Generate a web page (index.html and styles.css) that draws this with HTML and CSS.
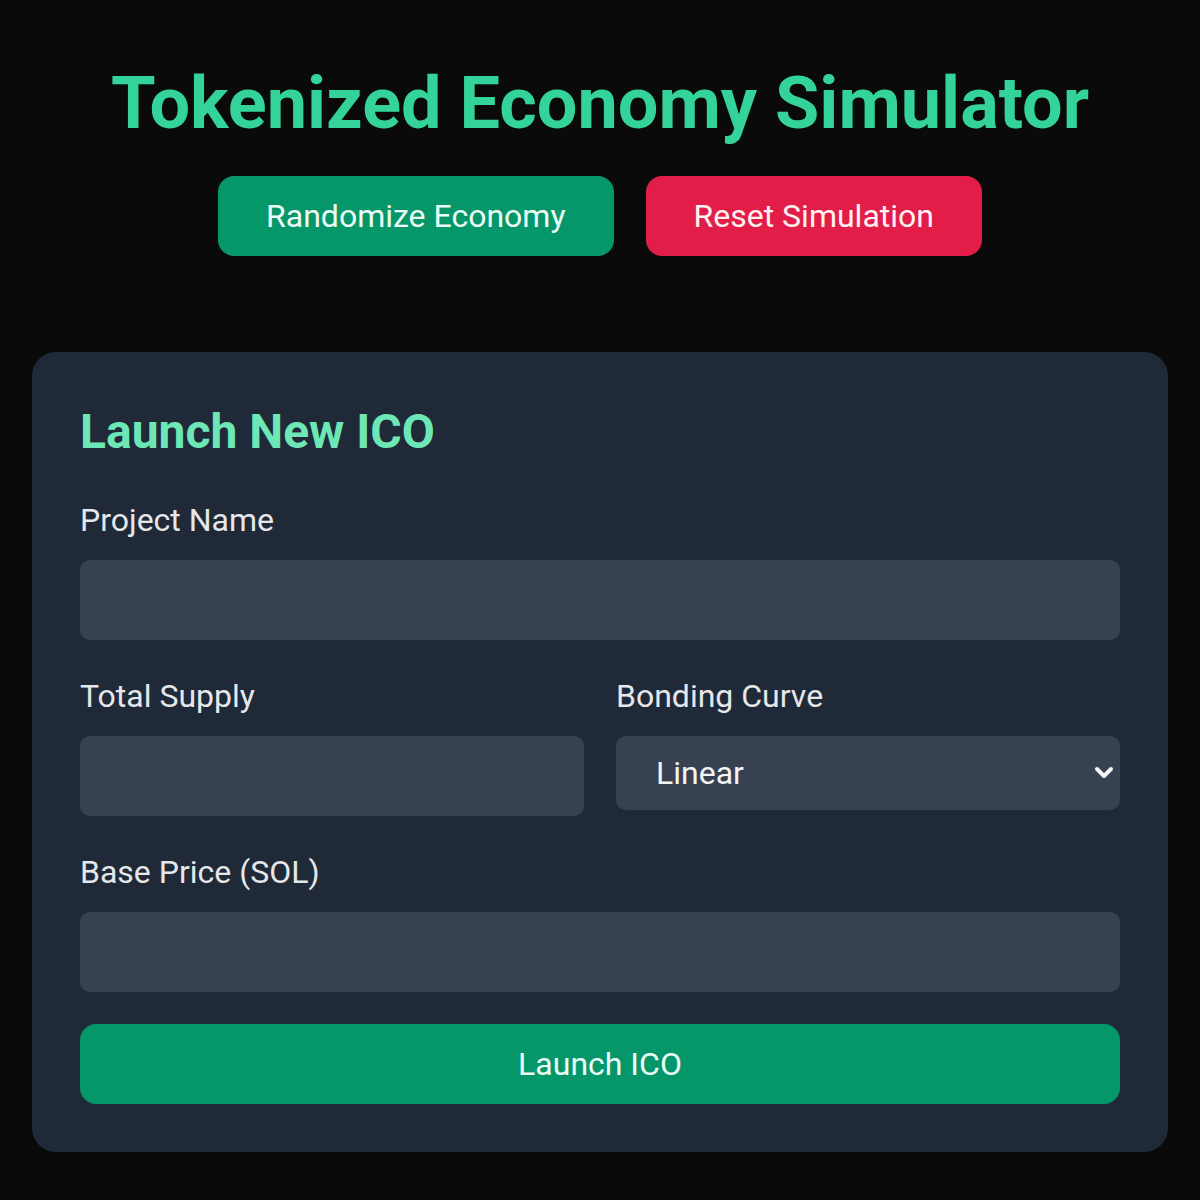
FILE: index.html
```html
<!DOCTYPE html>
<html lang="en">
<head>
<meta charset="utf-8">
<title>Tokenized Economy Simulator</title>
<link rel="stylesheet" href="styles.css">
</head>
<body>
<main class="page">
  <h1 class="title">Tokenized Economy Simulator</h1>
  <div class="actions">
    <button class="btn btn-green">Randomize Economy</button>
    <button class="btn btn-red">Reset Simulation</button>
  </div>
  <section class="card">
    <h2 class="card-title">Launch New ICO</h2>
    <div class="field">
      <label class="label">Project Name</label>
      <input class="input" type="text">
    </div>
    <div class="row">
      <div class="field">
        <label class="label">Total Supply</label>
        <input class="input" type="text">
      </div>
      <div class="field">
        <label class="label">Bonding Curve</label>
        <div class="select-wrap">
          <select class="select">
            <option>Linear</option>
            <option>Exponential</option>
          </select>
          <svg class="chevron" width="20" height="14" viewBox="0 0 20 14"><path d="M3 3 L10 10 L17 3" fill="none" stroke="#f3f4f6" stroke-width="4" stroke-linecap="round" stroke-linejoin="round"/></svg>
        </div>
      </div>
    </div>
    <div class="field">
      <label class="label">Base Price (SOL)</label>
      <input class="input" type="text">
    </div>
    <button class="btn btn-green btn-block">Launch ICO</button>
  </section>
</main>
</body>
</html>
```
FILE: styles.css
```css
* { box-sizing: border-box; }
html, body { margin: 0; padding: 0; background: #0a0a0a; }
body { font-family: Roboto, "Noto Sans", sans-serif; color: #e5e7eb; }
.page { padding: 64px 32px 48px; }
.title {
  margin: 0 0 32px;
  text-align: center;
  font-size: 72px;
  line-height: 80px;
  font-weight: 700;
  color: #34d399;
}
.actions { display: flex; justify-content: center; gap: 32px; margin-bottom: 96px; }
.btn {
  font-family: inherit;
  font-size: 32px;
  line-height: 48px;
  padding: 16px 48px;
  border: 0;
  border-radius: 16px;
  color: #ecfdf5;
  cursor: pointer;
}
.btn-green { background: #059669; }
.btn-red { background: #e11d48; color: #fff1f2; }
.card {
  background: #1f2937;
  border-radius: 24px;
  padding: 48px;
}
.card-title {
  margin: 0 0 32px;
  font-size: 48px;
  line-height: 64px;
  font-weight: 700;
  color: #6ee7b7;
}
.field { display: flex; flex-direction: column; gap: 16px; margin-bottom: 32px; }
.row { display: grid; grid-template-columns: 1fr 1fr; gap: 32px; }
.label { font-size: 32px; line-height: 48px; color: #e5e7eb; }
.input {
  height: 80px;
  background: #374151;
  border: 0;
  border-radius: 10px;
  font-family: inherit;
  font-size: 32px;
  color: #f3f4f6;
  padding: 0 32px;
  outline: none;
}
.select-wrap { position: relative; }
.select {
  width: 100%;
  height: 74px;
  background: #374151;
  border: 0;
  border-radius: 10px;
  font-family: inherit;
  font-size: 32px;
  color: #f3f4f6;
  padding: 0 40px;
  appearance: none;
  -webkit-appearance: none;
  outline: none;
}
.chevron { position: absolute; right: 6px; top: 30px; }
.btn-block { display: block; width: 100%; padding: 16px 0; }
```
